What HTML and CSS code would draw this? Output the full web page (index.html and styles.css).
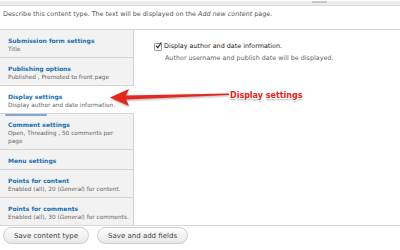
FILE: index.html
```html
<!DOCTYPE html>
<html lang="en">
<head>
	<meta charset="UTF-8">
	<title>Content type</title>
	<link rel="stylesheet" href="styles.css">
</head>
<body>
	<!-- bottom of the description textarea -->
	<div class="textarea-end">
		<div class="grippie"><span></span></div>
	</div>
	<p class="desc">Describe this content type. The text will be displayed on the <em>Add new content</em> page.</p>

	<div class="vtabs">
		<ul class="tab-list">
			<li>
				<a href="#">Submission form settings</a>
				<span class="summary">Title</span>
			</li>
			<li>
				<a href="#">Publishing options</a>
				<span class="summary">Published , Promoted to front page</span>
			</li>
			<li class="selected">
				<a href="#">Display settings</a>
				<span class="summary">Display author and date information.</span>
			</li>
			<li>
				<a href="#">Comment settings</a>
				<span class="summary">Open, Threading , 50 comments per<br>page</span>
			</li>
			<li>
				<a href="#">Menu settings</a>
			</li>
			<li>
				<a href="#">Points for content</a>
				<span class="summary">Enabled (all), 20 (<em>General</em>) for content.</span>
			</li>
			<li>
				<a href="#">Points for comments</a>
				<span class="summary">Enabled (all), 30 (<em>General</em>) for comments.</span>
			</li>
		</ul>
		<div class="pane">
			<label class="check"><span class="box"><svg viewBox="0 0 8 8" width="7" height="7"><path d="M1.2 4.2 L3.2 6.6 L7.2 0.6" fill="none" stroke="#222" stroke-width="1.3"/></svg></span>Display author and date information.</label>
			<p class="hint">Author username and publish date will be displayed.</p>
		</div>
	</div>

	<div class="actions">
		<button>Save content type</button>
		<button>Save and add fields</button>
	</div>

	<!-- annotation -->
	<svg class="arrow" width="130" height="30" viewBox="0 0 130 30">
		<path d="M5 15.5 L24 7 L21 13.6 L124 11.6 L124 13 L21 17.6 L24 24 Z" fill="#e4261c"/>
	</svg>
	<span class="callout">Display settings</span>
</body>
</html>
```

FILE: styles.css
```css
html,
body{
	margin: 0;
	padding: 0;
	width: 100%;
	height: 100%;
	background: #fff;
	font-family: "DejaVu Sans", "Liberation Sans", sans-serif;
	font-size: 6.4px;
	color: #333;
	overflow: hidden;
	position: relative;
}
.textarea-end{
	height: 3px;
}
.grippie{
	height: 4px;
	background: #ececec;
	border-bottom: 1px solid #ddd;
}
.grippie span{
	display: block;
	width: 15px;
	height: 2px;
	margin: 1px 0 0 312px;
	background: #c8c8c8;
}
.desc{
	margin: 6px 0 0 3px;
	line-height: 8px;
	color: #555;
}
.vtabs{
	margin-top: 11px;
	border-top: 1px solid #d4d4d4;
	border-bottom: 1px solid #d8d8d8;
	display: flex;
}
.tab-list{
	margin: 0;
	padding: 0;
	list-style: none;
	width: 133px;
	flex: none;
	background: #f2f2f2;
	border-right: 1px solid #d4d4d4;
}
.tab-list li{
	padding: 6px 2px 4px 8px;
	border-bottom: 1px solid #d4d4d4;
	position: relative;
}
.tab-list li:last-child{
	border-bottom: 0;
}
.tab-list a{
	display: block;
	line-height: 9px;
	font-size: 6px;
	font-weight: bold;
	color: #1a6fb0;
	text-decoration: none;
}
.tab-list .summary{
	display: block;
	line-height: 8px;
	font-size: 5.8px;
	color: #666;
}
.tab-list li.selected{
	background: #fff;
	margin-right: -1px;
}
.tab-list li.selected::after{
	content: "";
	position: absolute;
	left: 5px;
	bottom: -3px;
	width: 42px;
	height: 2px;
	border-radius: 1px;
	background: #86a6d4;
}
.pane{
	flex: 1;
	padding: 12px 0 0 20px;
}
.check{
	display: flex;
	align-items: center;
	line-height: 9px;
	color: #222;
}
.check .box{
	width: 6px;
	height: 6px;
	border: 1px solid #999;
	border-radius: 1px;
	background: #fff;
	margin-right: 2px;
	position: relative;
}
.check .box svg{
	position: absolute;
	left: 0;
	top: -2px;
}
.hint{
	margin: 3px 0 0 11px;
	line-height: 8px;
	color: #666;
}
.actions{
	display: flex;
	gap: 8px;
	padding: 1px 0 0 3px;
}
.actions button{
	height: 17px;
	padding: 0 10px;
	border: 1px solid #ccc;
	border-radius: 9px;
	background: linear-gradient(#fdfdfd, #e8e8e8);
	font-family: "DejaVu Sans", "Liberation Sans", sans-serif;
	font-size: 7px;
	color: #444;
}
.arrow{
	position: absolute;
	left: 105px;
	top: 82px;
	filter: drop-shadow(0 1px 1px rgba(0,0,0,0.35));
}
.callout{
	position: absolute;
	left: 230px;
	top: 90px;
	font-size: 8px;
	font-weight: bold;
	line-height: 11px;
	color: #e2231a;
	text-shadow: 1px 1px 0 #fff, -1px -1px 0 #fff, 1px -1px 0 #fff, -1px 1px 0 #fff, 0 2px 2px rgba(0,0,0,0.4);
}
```
